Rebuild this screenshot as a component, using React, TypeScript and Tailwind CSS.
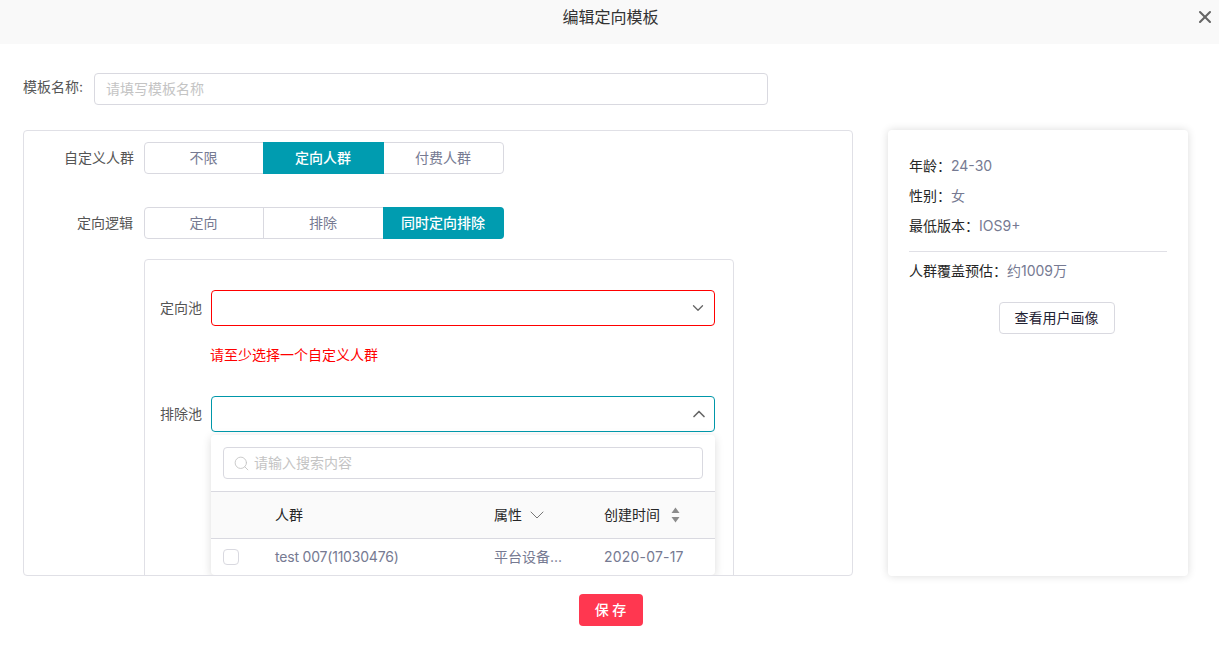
import { ChevronDown, ChevronUp, Search, X } from "lucide-react";

const SANS = "font-['Inter','Noto_Sans_CJK_SC',sans-serif]";

function Segmented({ items, active }: { items: { label: string; width: string }[]; active: number }) {
  return (
    <div className="flex h-8 w-[360px] rounded border border-[#d9d9e0] text-sm text-[#767a92]">
      {items.map((item, i) => (
        <div
          key={item.label}
          className={`flex items-center justify-center pr-px ${item.width} ${
            i === active
              ? "-my-px h-8 bg-[#009cb0] font-medium text-white first:rounded-l last:-mr-px last:rounded-r"
              : i > 0 && i - 1 !== active
                ? "border-l border-[#d9d9e0]"
                : ""
          }`}
        >
          {item.label}
        </div>
      ))}
    </div>
  );
}

function Select({ invalid, open }: { invalid?: boolean; open?: boolean }) {
  return (
    <div
      className={`flex h-9 w-[504px] items-center justify-end rounded border text-[#666] ${
        invalid ? "border-[#f00] pr-[7px]" : "border-[#0097a9] pr-[5px]"
      }`}
    >
      {open ? <ChevronUp size={20} strokeWidth={2} /> : <ChevronDown size={18} strokeWidth={1.75} />}
    </div>
  );
}

export default function App() {
  return (
    <div className={`h-[645px] w-[1219px] overflow-hidden bg-white ${SANS}`}>
      <div className="relative flex h-11 justify-center bg-[#f9f9f9] pl-[2px] pt-[5px] text-base leading-6 text-[#333]">
        编辑定向模板
        <X size={20} strokeWidth={2.5} className="absolute right-[4px] top-[7px] text-[#666]" />
      </div>

      <div className="ml-[23px] mt-[29px] flex items-center">
        <span className="-mt-[4px] w-[71px] text-sm text-[#555]">模板名称:</span>
        <div className="flex h-8 w-[674px] items-center rounded border border-[#d9d9e0] pl-[11px] text-sm text-[#c4c4c4]">
          请填写模板名称
        </div>
      </div>

      <div className="ml-[23px] mt-[25px] flex h-[446px] items-start gap-[35px]">
        <div className="h-full w-[830px] overflow-hidden rounded border border-[#e0e0e6] pl-[120px] pt-[11px]">
          <div className="flex items-center">
            <span className="-ml-[80px] mr-[11px] w-[69px] whitespace-nowrap text-right text-sm text-[#555]">自定义人群</span>
            <Segmented
              active={1}
              items={[
                { label: "不限", width: "w-[118px]" },
                { label: "定向人群", width: "w-[121px]" },
                { label: "付费人群", width: "w-[119px]" },
              ]}
            />
          </div>
          <div className="mt-[33px] flex items-center">
            <span className="-ml-[80px] mr-[11px] w-[69px] whitespace-nowrap text-right text-sm text-[#555]">定向逻辑</span>
            <Segmented
              active={2}
              items={[
                { label: "定向", width: "w-[118px]" },
                { label: "排除", width: "w-[120px]" },
                { label: "同时定向排除", width: "w-[121px]" },
              ]}
            />
          </div>

          <div className="mt-5 h-[400px] w-[590px] rounded border border-[#e0e0e6] pl-[15px] pt-[30px]">
            <div className="flex items-center gap-[9px]">
              <span className="text-sm text-[#555]">定向池</span>
              <Select invalid />
            </div>
            <p className="ml-[50px] mt-[19px] text-sm leading-5 text-[#f00]">请至少选择一个自定义人群</p>
            <div className="mt-[31px] flex items-center gap-[9px]">
              <span className="text-sm text-[#555]">排除池</span>
              <Select open />
            </div>

            <div className="ml-[51px] mt-[3px] w-[504px] rounded bg-white shadow-[0_2px_10px_rgba(0,0,0,0.14)]">
              <div className="p-3">
                <div className="flex h-8 items-center gap-[4px] rounded border border-[#d9d9e0] pl-[9px] text-sm text-[#c4c4c4]">
                  <Search size={17} strokeWidth={1.25} />
                  请输入搜索内容
                </div>
              </div>
              <div className="flex h-12 items-center border-y border-[#d9d9e0] bg-[#fafafa] text-sm text-[#262626]">
                <span className="ml-16 w-[219px]">人群</span>
                <span className="flex w-[110px] items-center gap-[3px]">
                  属性
                  <ChevronDown size={24} strokeWidth={1} className="text-[#777]" />
                </span>
                <span className="flex items-center gap-[11px]">
                  创建时间
                  <svg width="9" height="16" viewBox="0 0 9 16" className="text-[#8c8c8c]">
                    <path d="M4.5 0.5 8.5 6H.5z" fill="currentColor" />
                    <path d="M4.5 15.5 .5 10h8z" fill="currentColor" />
                  </svg>
                </span>
              </div>
              <div className="flex h-9 items-center text-sm text-[#767a92]">
                <span className="ml-3 h-4 w-4 rounded-sm border border-[#d9d9e0]" />
                <span className="ml-9 w-[219px] tracking-[-0.2px]">test 007(11030476)</span>
                <span className="w-[110px]">平台设备...</span>
                <span className="tracking-[0.2px]">2020-07-17</span>
              </div>
            </div>
          </div>
        </div>

        <div className="h-full w-[300px] rounded bg-white px-[21px] pt-[26px] text-sm text-[#262626] shadow-[0_0_8px_rgba(0,0,0,0.14)]">
          <p className="h-[30px] leading-5">
            年龄：<span className="text-[#767a92]">24-30</span>
          </p>
          <p className="h-[30px] leading-5">
            性别：<span className="text-[#767a92]">女</span>
          </p>
          <p className="h-[35px] leading-5">
            最低版本：<span className="text-[#767a92]">IOS9+</span>
          </p>
          <div className="w-[258px] border-t border-[#e0e0e6] pt-[9px] leading-5">
            人群覆盖预估：<span className="text-[#767a92]">约1009万</span>
          </div>
          <div className="ml-[90px] mt-[21px] flex h-8 w-[116px] items-center justify-center rounded border border-[#d9d9e0] pr-px text-sm text-[#1f2233]">
            查看用户画像
          </div>
        </div>
      </div>

      <div className="ml-[579px] mt-[18px] flex h-8 w-16 items-center justify-center rounded bg-[#ff3750] pr-px text-sm font-medium text-white">
        保 存
      </div>
    </div>
  );
}
